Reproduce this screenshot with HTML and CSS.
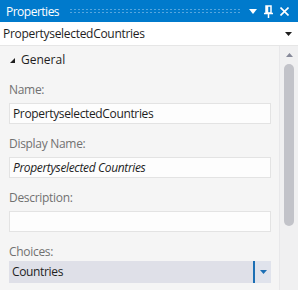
FILE: index.html
```html
<!DOCTYPE html>
<html lang="en">
<head>
  <meta charset="UTF-8">
  <title>Properties</title>
  <link rel="stylesheet" href="styles.css">
</head>
<body>
  <div class="panel">
    <div class="titlebar">
      <span class="title">Properties</span>
      <span class="grip"></span>
      <span class="title-icons">
        <svg width="8" height="5" viewBox="0 0 8 5"><path d="M0 0H8L4 5Z" fill="#fff"/></svg>
        <svg width="9" height="13" viewBox="0 0 9 13"><path d="M2 1H7V8H2Z M3.5 1V8" fill="none" stroke="#fff" stroke-width="1.5"/><path d="M0 8.5H9M4.5 8.5V13" stroke="#fff" stroke-width="1.5"/></svg>
        <svg width="9" height="9" viewBox="0 0 9 9"><path d="M0.5 0.5L8.5 8.5M8.5 0.5L0.5 8.5" stroke="#fff" stroke-width="1.6"/></svg>
      </span>
    </div>
    <div class="selector">
      <span>PropertyselectedCountries</span>
      <svg width="7" height="4" viewBox="0 0 7 4"><path d="M0 0H7L3.5 4Z" fill="#1e1e1e"/></svg>
    </div>
    <div class="body">
      <div class="content">
        <div class="group">
          <svg width="5" height="5" viewBox="0 0 5 5"><path d="M5 0V5H0Z" fill="#1e1e1e"/></svg>
          <span>General</span>
        </div>
        <div class="field">
          <div class="label">Name:</div>
          <div class="textbox">PropertyselectedCountries</div>
        </div>
        <div class="field">
          <div class="label">Display Name:</div>
          <div class="textbox italic">Propertyselected Countries</div>
        </div>
        <div class="field">
          <div class="label">Description:</div>
          <div class="textbox"></div>
        </div>
        <div class="field choices">
          <div class="label">Choices:</div>
          <div class="combo">
            <span class="combo-text">Countries</span>
            <span class="combo-btn">
              <svg width="7" height="4" viewBox="0 0 7 4"><path d="M0 0H7L3.5 4Z" fill="#1c6fb4"/></svg>
            </span>
          </div>
        </div>
      </div>
      <div class="scrollbar">
        <svg class="scroll-up" width="7" height="4" viewBox="0 0 7 4"><path d="M0 4H7L3.5 0Z" fill="#868999"/></svg>
        <div class="thumb"></div>
      </div>
    </div>
  </div>
</body>
</html>
```

FILE: styles.css
```css
body {
  margin: 0;
  font-family: "Open Sans", "Noto Sans", sans-serif;
  font-size: 12px;
  color: #1e1e1e;
  background-color: #f5f5f5;
}
.panel {
  width: 298px;
  height: 290px;
  display: flex;
  flex-direction: column;
  overflow: hidden;
}
.titlebar {
  flex-shrink: 0;
  height: 22px;
  background-color: #007acc;
  color: #fff;
  display: flex;
  align-items: center;
  padding-left: 6px;
}
.title {
  font-size: 12px;
  letter-spacing: -0.5px;
}
.grip {
  flex: 1;
  height: 6px;
  margin: 0 8px 0 10px;
  background-image: radial-gradient(circle, rgba(190, 220, 245, 0.45) 0.7px, transparent 0.8px);
  background-size: 4px 3px;
}
.title-icons {
  display: flex;
  align-items: center;
  gap: 7px;
  padding-right: 9px;
}
.selector {
  flex-shrink: 0;
  height: 23px;
  background-color: #fff;
  display: flex;
  align-items: center;
  justify-content: space-between;
  padding: 0 6px 0 3px;
  border-bottom: 1px solid #e6e6e6;
  letter-spacing: -0.3px;
}
.body {
  flex: 1;
  min-height: 0;
  display: flex;
}
.content {
  flex: 1;
  padding: 5px 5px 0 9px;
}
.group {
  display: flex;
  align-items: center;
  gap: 6px;
  height: 16px;
  padding-left: 1px;
  margin-bottom: 15px;
}
.group svg {
  margin-top: 2px;
}
.field {
  margin-bottom: 12px;
}
.label {
  color: #717171;
  height: 18px;
  line-height: 16px;
  margin-bottom: 3px;
  letter-spacing: -0.3px;
}
.choices .label {
  margin-bottom: -1px;
}
.textbox {
  height: 19px;
  line-height: 19px;
  background-color: #fdfdfd;
  border: 1px solid #e3e3e3;
  padding-left: 3px;
  letter-spacing: -0.35px;
}
.italic {
  font-style: italic;
}
.combo {
  height: 22px;
  display: flex;
  background-color: #dfe0e8;
  letter-spacing: -0.35px;
}
.combo-text {
  flex: 1;
  line-height: 22px;
  padding-left: 3px;
}
.combo-btn {
  width: 16px;
  border-left: 2px solid #1c6fb4;
  display: flex;
  align-items: center;
  justify-content: center;
  background-color: #e0e3ec;
}
.scrollbar {
  width: 18px;
  margin-left: 3px;
  background-color: #f0f0f1;
  border-left: 1px solid #e8e8ea;
  display: flex;
  flex-direction: column;
  align-items: center;
  padding-top: 7px;
}
.scroll-up {
  margin-bottom: 7px;
}
.thumb {
  width: 10px;
  height: 162px;
  border-radius: 5px;
  background-color: #c2c3c9;
}
```
